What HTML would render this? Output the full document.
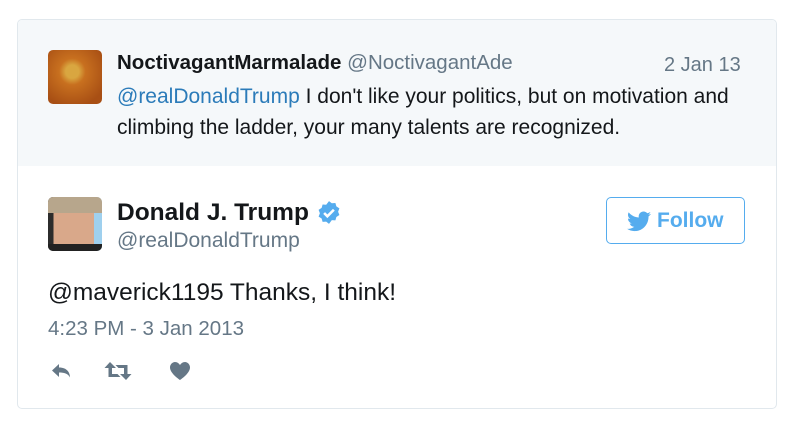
<!DOCTYPE html>
<html><head><style>
body{margin:0;background:#fff;font-family:"Liberation Sans",Arial,sans-serif;width:799px;height:433px;overflow:hidden;position:relative}
.card{position:absolute;left:17px;top:19px;width:758px;height:388px;border:1px solid #e1e8ed;border-radius:5px;overflow:hidden}
.q{position:absolute;left:0;top:0;right:0;height:146px;background:#f5f8fa}
.a{position:absolute;white-space:nowrap}
</style></head><body>
<div class="card">
<div class="q"></div>
</div>
<div class="a" style="left:48px;top:50px;width:54px;height:54px;border-radius:5px;background:radial-gradient(circle at 45% 40%,#d9a640 0 15%,#c8701f 30%,#a84f14 80%)"></div>
<div class="a" style="left:117px;top:51px;font-size:20.5px;color:#14171a"><b>NoctivagantMarmalade</b> <span style="color:#657786">@NoctivagantAde</span></div>
<div class="a" style="left:664px;top:54px;font-size:20px;color:#657786">2 Jan 13</div>
<div class="a" style="left:117px;top:81px;font-size:21px;line-height:31px;color:#14171a;width:640px;white-space:normal"><span style="color:#2b7bb9">@realDonaldTrump</span> I don't like your politics, but on motivation and climbing the ladder, your many talents are recognized.</div>
<div class="a" style="left:48px;top:197px;width:54px;height:54px;border-radius:5px;background:linear-gradient(90deg,#2c2c2c 0 10%,#d9a88a 10% 85%,#9fd0ee 85%);overflow:hidden"><div style="position:absolute;left:0;right:0;top:0;height:16px;background:#b7a68c"></div><div style="position:absolute;left:0;right:0;bottom:0;height:7px;background:#222"></div></div>
<div class="a" style="left:117px;top:199px;font-size:24.5px;font-weight:bold;color:#14171a">Donald J. Trump</div>
<svg class="a" style="left:316px;top:200px" width="26" height="26" viewBox="0 0 24 24"><path fill="#55acee" d="M12 1l2.6 2 3.3-.2.9 3.1 2.8 1.8-1.2 3.1 1.2 3.1-2.8 1.8-.9 3.1-3.3-.2L12 22l-2.6-2-3.3.2-.9-3.1-2.8-1.8 1.2-3.1-1.2-3.1 2.8-1.8.9-3.1 3.3.2z"/><path d="M7.5 12l3 3 6-6" stroke="#fff" stroke-width="2.4" fill="none"/></svg>
<div class="a" style="left:117px;top:229px;font-size:21px;color:#657786">@realDonaldTrump</div>
<div class="a" style="left:606px;top:197px;border:1px solid #55acee;border-radius:5px;box-sizing:border-box;width:139px;height:47px"></div>
<svg class="a" style="left:627px;top:211px" width="24" height="21" viewBox="0 0 24 20"><path fill="#55acee" d="M24 2.4c-.9.4-1.8.7-2.8.8 1-.6 1.8-1.6 2.2-2.7-1 .6-2 1-3.1 1.2C19.3.7 18 0 16.6 0c-2.7 0-4.9 2.2-4.9 4.9 0 .4 0 .8.1 1.1C7.7 5.8 4.1 3.9 1.7.9c-.4.7-.7 1.6-.7 2.5 0 1.7.9 3.2 2.2 4.1-.8 0-1.6-.2-2.2-.6v.1c0 2.4 1.7 4.4 3.9 4.8-.4.1-.8.2-1.3.2-.3 0-.6 0-.9-.1.6 2 2.4 3.4 4.6 3.4-1.7 1.3-3.8 2.1-6.1 2.1-.4 0-.8 0-1.2-.1C2.2 18.8 4.8 19.6 7.5 19.6c9.1 0 14-7.5 14-14v-.6c1-.7 1.8-1.6 2.5-2.6z"/></svg>
<div class="a" style="left:657px;top:209px;font-size:21px;font-weight:bold;color:#55acee">Follow</div>
<div class="a" style="left:48px;top:279px;font-size:24.5px;color:#14171a">@maverick1195 Thanks, I think!</div>
<div class="a" style="left:48px;top:317px;font-size:20.5px;color:#657786">4:23 PM - 3 Jan 2013</div>
<svg class="a" style="left:50px;top:362px" width="24" height="18" viewBox="0 0 24 18"><path fill="#657786" d="M9 2L2 8.5 9 15v-4.5c5 0 9 1 11 5 0-5-3-10-11-10z"/></svg>
<svg class="a" style="left:104px;top:361px" width="28" height="20" viewBox="0 0 28 20"><path fill="#657786" d="M6 1l-5.5 6h4v9h12l-3-3H8V7h4zM22 19l5.5-6h-4V4h-12l3 3H20v6h-4z"/></svg>
<svg class="a" style="left:169px;top:361px" width="22" height="20" viewBox="0 0 22 20"><path fill="#657786" d="M11 19S1 12.5 1 6.5C1 3.5 3.3 1 6 1c2.3 0 4 1.5 5 3 1-1.5 2.7-3 5-3 2.7 0 5 2.5 5 5.5C21 12.5 11 19 11 19z"/></svg>
</body></html>
